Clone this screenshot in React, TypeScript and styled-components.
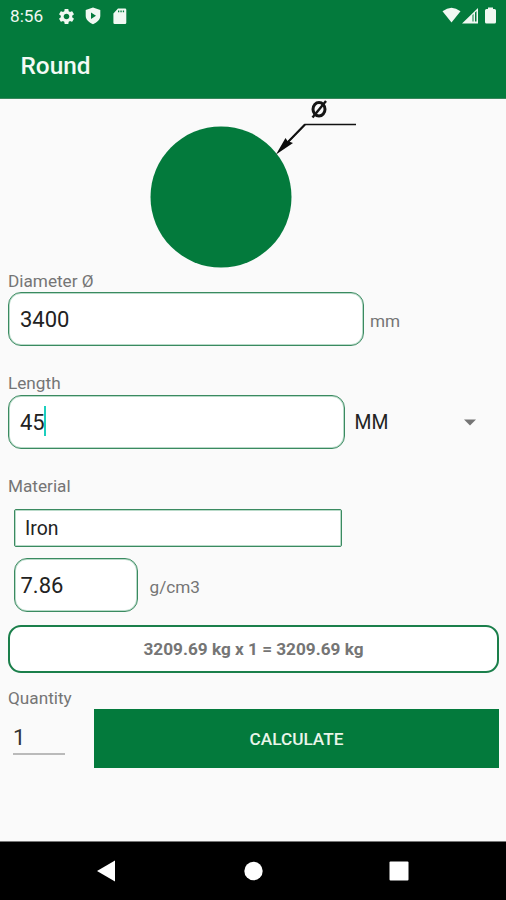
import React from "react";
import styled, { createGlobalStyle } from "styled-components";
import { MdSettings } from "react-icons/md";

const GREEN = "#037a3c";

const GlobalStyle = createGlobalStyle`
  * { box-sizing: border-box; }
  body { margin: 0; background: #fafafa; font-family: Roboto, sans-serif; }
`;

const Screen = styled.div`
  width: 506px;
  height: 900px;
  display: flex;
  flex-direction: column;
  overflow: hidden;
  background: #fafafa;
  color: #757575;
`;

const StatusBar = styled.div`
  height: 32px;
  flex: none;
  display: flex;
  align-items: center;
  justify-content: space-between;
  padding: 0 6px 0 10px;
  background: ${GREEN};
  color: #f1f8f2;
`;

const StatusGroup = styled.div`
  display: flex;
  align-items: center;
`;

const Clock = styled.span`
  width: 47px;
  font-size: 17.2px;
  line-height: 32px;
`;

const StatusIcon = styled.svg<{ $left?: number }>`
  display: block;
  margin-left: ${(p) => p.$left ?? 0}px;
`;

const AppBar = styled.header`
  height: 67px;
  flex: none;
  display: flex;
  align-items: center;
  padding: 2px 20.5px 0;
  background: ${GREEN};
  border-bottom: 1px solid #39865c;
`;

const Title = styled.h1`
  margin: 0;
  color: #f4faf5;
  font-size: 24.4px;
  font-weight: 500;
  line-height: 64px;
`;

const Figure = styled.svg`
  display: block;
  width: 506px;
  height: 172px;
  flex: none;
`;

const Label = styled.div<{ $top?: number }>`
  margin: ${(p) => p.$top ?? 0}px 0 0 8px;
  height: 21px;
  flex: none;
  font-size: 17.2px;
  line-height: 21px;
`;

const Row = styled.div<{ $left?: number; $top?: number }>`
  display: flex;
  align-items: center;
  flex: none;
  margin: ${(p) => p.$top ?? 0}px 7px 0 ${(p) => p.$left ?? 8}px;
`;

const Field = styled.div<{ $width: number; $pad?: number }>`
  width: ${(p) => p.$width}px;
  height: 54px;
  display: flex;
  align-items: center;
  padding: 1px 0 0 ${(p) => p.$pad ?? 11}px;
  border: 1px solid #3a8a60;
  border-radius: 13px;
  box-shadow: inset 0 0 0 1px rgba(3, 122, 60, 0.28);
  background: #fff;
  color: #222;
  font-size: 22px;
`;

const Caret = styled.span`
  width: 2px;
  height: 30px;
  margin: -2px 0 0 -0.5px;
  background: #1ccfbe;
`;

const Unit = styled.span<{ $left: number }>`
  margin: 4px 0 0 ${(p) => p.$left}px;
  font-size: 17.2px;
`;

const UnitSelect = styled.div`
  flex: 1;
  display: flex;
  align-items: center;
  justify-content: space-between;
  padding: 2px 23px 0 9.5px;
  color: #222;
  font-size: 19.4px;
`;

const MaterialField = styled.div`
  width: 328px;
  height: 38px;
  flex: none;
  display: flex;
  align-items: center;
  margin: 12px 0 0 14px;
  padding: 1px 0 0 10px;
  border: 1px solid #3a8a60;
  border-radius: 2px;
  box-shadow: inset 0 0 0 1px rgba(3, 122, 60, 0.28);
  background: #fff;
  color: #222;
  font-size: 19.4px;
`;

const Result = styled.div`
  height: 48px;
  flex: none;
  display: flex;
  align-items: center;
  justify-content: center;
  margin: 12.5px 7px 0 8px;
  padding-top: 1px;
  border: 2px solid #1b7f4b;
  border-radius: 13px;
  background: #fff;
  font-size: 17.2px;
  font-weight: 700;
`;

const QuantityRow = styled.div`
  display: flex;
  align-items: flex-start;
  flex: none;
  margin: 0 7px 0 13px;
`;

const Quantity = styled.div`
  width: 52px;
  height: 46px;
  border-bottom: 2px solid #bababa;
  color: #333;
  font-size: 22px;
  line-height: 57px;
`;

const Calculate = styled.button`
  width: 405px;
  height: 59px;
  margin-left: 29px;
  padding: 1px 0 0;
  border: 0;
  background: ${GREEN};
  color: #e9f5e9;
  font: 500 17.2px/58px Roboto, sans-serif;
`;

const NavBar = styled.nav`
  height: 59px;
  flex: none;
  margin-top: auto;
  background: #000;
  border-top: 1px solid #777;
`;

export default function App() {
  return (
    <Screen>
      <GlobalStyle />
      <StatusBar>
        <StatusGroup>
          <Clock>8:56</Clock>
          <MdSettings size={19} />
          <StatusIcon $left={9} width="16" height="18" viewBox="0 0 16 18">
            <path
              fill="currentColor"
              fillRule="evenodd"
              d="M8 .5 15.300 3v5.800c0 3.800-3.300 6.800-7.300 8.500C4 15.600.7 12.600.7 8.800V3ZM6 5.500v6.400l5-3.200Z"
            />
          </StatusIcon>
          <StatusIcon $left={12} width="14" height="17" viewBox="0 0 14 17">
            <path
              fill="currentColor"
              fillRule="evenodd"
              d="M5 .5h7q1.300 0 1.300 1.300v12.900Q13.300 16 12 16H1.600Q.4 16 .4 14.700V5.500ZM5 2.500v1.700h1.300V2.500Zm2.400 0v1.700h1.300V2.500Zm2.400 0v1.700h1.300V2.500Z"
            />
          </StatusIcon>
        </StatusGroup>
        <StatusIcon width="58" height="20" viewBox="0 0 58 20">
          <path fill="currentColor" d="M.5 5.200Q9.500-1.800 18.500 5.200L9.500 16.500Z" />
          <path fill="currentColor" fillRule="evenodd" d="M20 17.500 36 2V17.500ZM30.500 9v6.500h1V8Zm2.500-2.500v9h1.500V5Z" />
          <path fill="currentColor" d="M46 1.500h5v1.500h1.500q1.500 0 1.500 1.500V16q0 1.500-1.500 1.500h-8q-1.500 0-1.500-1.500V4.500q0-1.500 1.500-1.500H46Z" />
        </StatusIcon>
      </StatusBar>
      <AppBar>
        <Title>Round</Title>
      </AppBar>
      <Figure viewBox="0 99 506 172">
        <circle cx="221" cy="197" r="70.500" fill={GREEN} />
        <path d="M356 124.500H305L284 146" fill="none" stroke="#111" strokeWidth="1.600" />
        <path d="M305 124.500 288 142" stroke="#111" strokeWidth="2" />
        <path d="M276 154.500 285.500 138 287.500 141 293 143Z" fill="#0b0b0b" />
        <ellipse cx="319" cy="109.300" rx="6" ry="6.800" fill="none" stroke="#151515" strokeWidth="3" />
        <path d="M312.500 117.500 326 101" stroke="#151515" strokeWidth="2.400" />
      </Figure>

      <Label>Diameter Ø</Label>
      <Row>
        <Field $width={356}>3400</Field>
        <Unit $left={6}>mm</Unit>
      </Row>

      <Label $top={27}>Length</Label>
      <Row $top={0.5}>
        <Field $width={337}>
          45
          <Caret />
        </Field>
        <UnitSelect>
          MM
          <svg width="12" height="7" viewBox="0 0 12 7">
            <path d="M0 .5h12L6 6.500Z" fill="#757575" />
          </svg>
        </UnitSelect>
      </Row>

      <Label $top={27.5}>Material</Label>
      <MaterialField>Iron</MaterialField>
      <Row $left={14} $top={11}>
        <Field $width={124} $pad={5.5}>7.86</Field>
        <Unit $left={11.5}>g/cm3</Unit>
      </Row>

      <Result>3209.69 kg x 1 = 3209.69 kg</Result>

      <Label $top={15}>Quantity</Label>
      <QuantityRow>
        <Quantity>1</Quantity>
        <Calculate>CALCULATE</Calculate>
      </QuantityRow>

      <NavBar>
        <svg width="506" height="58" viewBox="0 842 506 58" fill="#fff">
          <path d="M97 871 115 860.500V881.500Z" />
          <circle cx="253.500" cy="871" r="9.200" />
          <rect x="389.500" y="861.500" width="19" height="19" rx="1" />
        </svg>
      </NavBar>
    </Screen>
  );
}
